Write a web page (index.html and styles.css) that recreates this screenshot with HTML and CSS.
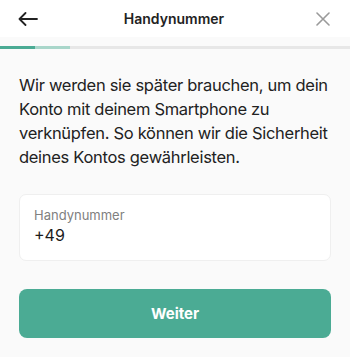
FILE: index.html
```html
<!DOCTYPE html>
<html lang="de">
<head>
  <meta charset="UTF-8">
  <meta name="viewport" content="width=device-width, initial-scale=1.0">
  <title>Handynummer</title>
  <link rel="stylesheet" href="styles.css">
</head>
<body>
  <header class="top-bar">
    <button class="icon-btn back" aria-label="Zurück">
      <svg width="20" height="14" viewBox="0 0 20 14" fill="none" stroke="#222" stroke-width="1.8" stroke-linecap="round" stroke-linejoin="round">
        <path d="M19 7H1.5M7.5 1L1.5 7l6 6"/>
      </svg>
    </button>
    <h1>Handynummer</h1>
    <button class="icon-btn close" aria-label="Schließen">
      <svg width="14" height="14" viewBox="0 0 14 14" fill="none" stroke="#9a9a9a" stroke-width="1.6" stroke-linecap="round">
        <path d="M1 1l12 12M13 1L1 13"/>
      </svg>
    </button>
  </header>

  <div class="progress">
    <div class="step done"></div>
    <div class="step current"></div>
  </div>

  <main class="content">
    <p class="intro">Wir werden sie später brauchen, um dein Konto mit deinem Smartphone zu verknüpfen. So können wir die Sicherheit deines Kontos gewährleisten.</p>

    <label class="field">
      <span class="field-label">Handynummer</span>
      <span class="field-value">+49</span>
    </label>

    <button class="primary">Weiter</button>
  </main>
</body>
</html>
```

FILE: styles.css
```css
:root {
  --teal: #4bab94;
  --teal-light: #a9d6ca;
  --track: #e7e7e7;
  --bg: #fafafa;
  --text: #222;
}

* {
  box-sizing: border-box;
  margin: 0;
  padding: 0;
}

body {
  background: var(--bg);
  color: var(--text);
  font-family: 'Inter', 'Liberation Sans', sans-serif;
}

.top-bar {
  display: flex;
  align-items: center;
  justify-content: space-between;
  height: 37px;
  padding: 0 18px 0 18px;
  background: #fff;
}

.top-bar h1 {
  font-size: 14px;
  font-weight: 600;
}

.icon-btn {
  background: none;
  border: none;
  display: flex;
  align-items: center;
  width: 20px;
  height: 20px;
}

.icon-btn.close {
  justify-content: flex-end;
  width: 20px;
  margin-right: 2px;
}

.progress {
  display: flex;
  height: 3px;
  margin-top: 9px;
  background: var(--track);
}

.step {
  width: 35px;
}

.step.done {
  background: var(--teal);
}

.step.current {
  background: var(--teal-light);
}

.content {
  padding: 24px 19px 0;
}

.intro {
  font-size: 16.5px;
  line-height: 24px;
  letter-spacing: -0.3px;
}

.field {
  display: flex;
  flex-direction: column;
  gap: 2px;
  margin-top: 25px;
  height: 67px;
  padding: 12px 14px;
  background: #fff;
  border: 1px solid #efefef;
  border-radius: 7px;
}

.field-label {
  font-size: 13px;
  color: #808080;
}

.field-value {
  font-size: 16px;
  color: #1c1c1c;
}

.primary {
  display: block;
  width: 100%;
  height: 49px;
  margin-top: 28px;
  background: var(--teal);
  color: #fff;
  border: none;
  border-radius: 8px;
  font-family: inherit;
  font-size: 15px;
  font-weight: 700;
}
```
